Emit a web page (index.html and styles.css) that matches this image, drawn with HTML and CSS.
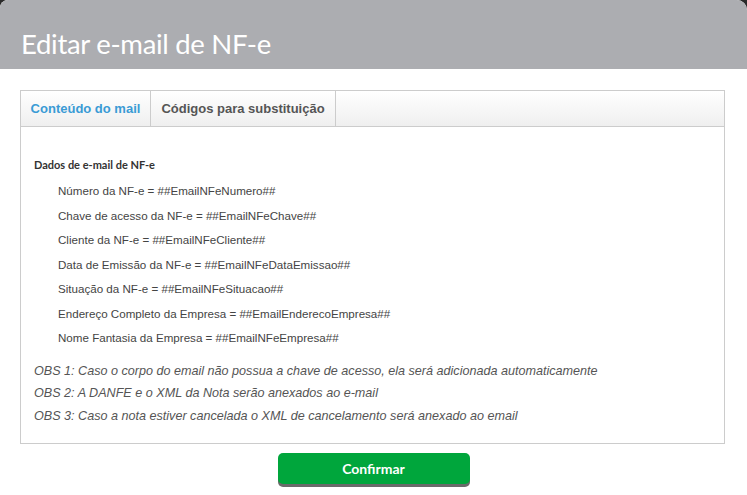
FILE: index.html
```html
<!DOCTYPE html>
<html lang="pt">
<head>
<meta charset="utf-8">
<link rel="stylesheet" href="styles.css">
</head>
<body>
<div class="modal">
  <div class="header"><h1 class="title">Editar e-mail de NF-e</h1></div>
  <div class="body">
    <div class="tabs">
      <div class="tabbar">
        <div class="tab active">Conteúdo do mail</div>
        <div class="tab">Códigos para substituição</div>
      </div>
      <div class="panel">
        <div class="section-title">Dados de e-mail de NF-e</div>
        <ul class="codes">
          <li>Número da NF-e = ##EmailNFeNumero##</li>
          <li>Chave de acesso da NF-e = ##EmailNFeChave##</li>
          <li>Cliente da NF-e = ##EmailNFeCliente##</li>
          <li>Data de Emissão da NF-e = ##EmailNFeDataEmissao##</li>
          <li>Situação da NF-e = ##EmailNFeSituacao##</li>
          <li>Endereço Completo da Empresa = ##EmailEnderecoEmpresa##</li>
          <li>Nome Fantasia da Empresa = ##EmailNFeEmpresa##</li>
        </ul>
        <div class="obs">
          <p>OBS 1: Caso o corpo do email não possua a chave de acesso, ela será adicionada automaticamente</p>
          <p>OBS 2: A DANFE e o XML da Nota serão anexados ao e-mail</p>
          <p>OBS 3: Caso a nota estiver cancelada o XML de cancelamento será anexado ao email</p>
        </div>
      </div>
    </div>
    <div class="actions"><button class="btn-confirm">Confirmar</button></div>
  </div>
</div>
</body>
</html>
```
FILE: styles.css
```css
html, body {
  margin: 0;
  padding: 0;
  background: #2a2a2a;
  height: 100%;
}
.modal {
  width: 747px;
  height: 495px;
  background: #fff;
  border-radius: 8px 10px 0 0;
  overflow: hidden;
  font-family: "Liberation Sans", Arial, sans-serif;
}
.header {
  height: 69px;
  background: #acadb1;
  display: flex;
  align-items: flex-end;
}
.title {
  margin: 0 0 9px 21px;
  color: #fff;
  font-family: Lato, "Liberation Sans", sans-serif;
  font-weight: 400;
  font-size: 27.5px;
  line-height: 32px;
  letter-spacing: -0.3px;
}
.body {
  padding: 21px 22px 0 20px;
}
.tabs {
  border: 1px solid #cccccc;
  height: 352px;
  display: flex;
  flex-direction: column;
}
.tabbar {
  display: flex;
  height: 35px;
  border-bottom: 1px solid #cccccc;
  background: linear-gradient(#ffffff, #efefef);
}
.tab {
  display: flex;
  align-items: center;
  justify-content: center;
  white-space: nowrap;
  font-size: 13px;
  font-weight: bold;
  color: #555;
  border-right: 1px solid #cccccc;
}
.tab.active {
  color: #3a9bd5;
  width: 129px;
}
.tab:nth-child(2) {
  width: 184px;
}
.panel {
  padding: 30px 13px 0 13px;
}
.section-title {
  font-family: Lato, "Liberation Sans", sans-serif;
  font-weight: 700;
  font-size: 11px;
  color: #333;
  line-height: 16px;
  margin-bottom: 6px;
}
.codes {
  list-style: none;
  margin: 0;
  padding: 0 0 0 24px;
}
.codes li {
  font-size: 11.6px;
  color: #444;
  line-height: 24.5px;
}
.obs {
  margin-top: 9px;
}
.obs p {
  margin: 0;
  font-style: italic;
  font-size: 12.6px;
  color: #555;
  line-height: 22.5px;
}
.actions {
  display: flex;
  justify-content: center;
  padding-top: 9px;
  padding-left: 2px;
}
.btn-confirm {
  width: 192px;
  height: 31px;
  border: none;
  border-radius: 5px;
  background: #00a63c;
  color: #fff;
  font-family: Lato, "Liberation Sans", sans-serif;
  font-weight: 700;
  font-size: 14px;
  box-shadow: 0 3px 0 #6a6a6a;
  cursor: pointer;
}
```
